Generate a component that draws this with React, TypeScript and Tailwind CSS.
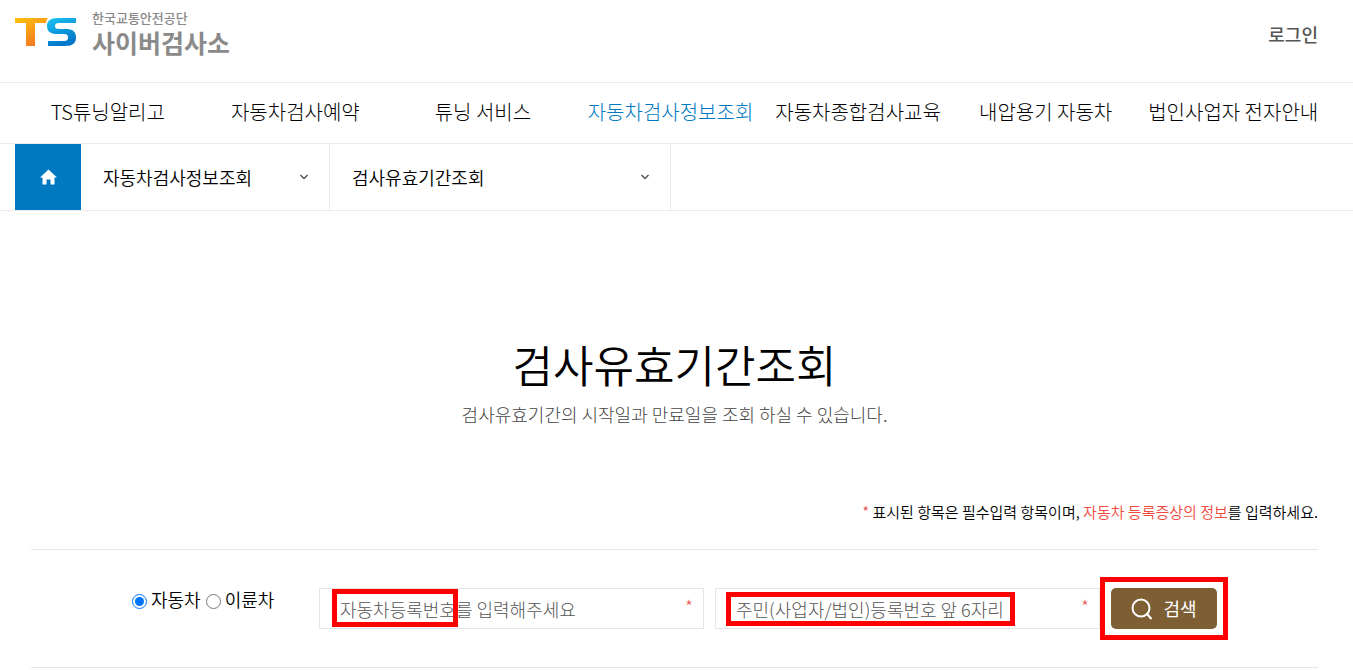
import React, { useState } from "react";

const menu = [
  { title: "TS튜닝알리고" },
  { title: "자동차검사예약" },
  { title: "튜닝 서비스" },
  { title: "자동차검사정보조회", active: true },
  { title: "자동차종합검사교육" },
  { title: "내압용기 자동차" },
  { title: "법인사업자 전자안내" },
];

function Logo() {
  return (
    <a href="#" className="flex gap-4">
      <svg className="mt-2 h-7 w-[61px]" viewBox="0 0 61 28" aria-label="TS">
        <defs>
          <linearGradient id="logoT" x1="0" y1="0" x2="0.5" y2="1">
            <stop offset="0" stopColor="#ffc20e" />
            <stop offset="1" stopColor="#f47b20" />
          </linearGradient>
          <linearGradient id="logoS" x1="0" y1="0" x2="0.4" y2="1">
            <stop offset="0" stopColor="#1cc4f4" />
            <stop offset="1" stopColor="#0077c8" />
          </linearGradient>
        </defs>
        <path d="M0 0H33Q31 2 31 5H20V28H11V5H0Z" fill="url(#logoT)" />
        <path
          d="M61 0H43C35 0 32 3 32 8C32 14 36 16 42 16H49C52 16 53 17 53 19.500C53 22 52 23 49 23H33V28H50C58 28 61 25 61 19.500C61 13 57 11 51 11H44C41 11 40 10 40 8C40 6 41 5 44 5H61Z"
          fill="url(#logoS)"
        />
      </svg>
      <span className="flex flex-col text-[#8a8a8a]">
        <span className="text-[13px] leading-4 font-medium">한국교통안전공단</span>
        <span className="text-[25px] leading-8 font-bold">사이버검사소</span>
      </span>
    </a>
  );
}

function Crumb({ title, width }: { title: string; width: string }) {
  return (
    <button
      type="button"
      className={`flex items-center justify-between border-r border-[#ebebeb] pr-5 pl-[22px] text-[18px] leading-6 ${width}`}
    >
      {title}
      <svg className="h-2 w-2.5" viewBox="0 0 10 8" fill="none" stroke="#555" strokeWidth="1.5">
        <path d="M1.500 2L5 5.500L8.500 2" />
      </svg>
    </button>
  );
}

type FieldProps = {
  label: string;
  placeholder: string;
  mark: string;
};

function Field({ label, placeholder, mark }: FieldProps) {
  return (
    <div className="relative flex-1">
      <input
        type="text"
        aria-label={label}
        placeholder={placeholder}
        className="h-[41px] w-full border border-[#e5e5e5] px-5 text-[18px] font-light placeholder:text-[#555]"
      />
      <span className="absolute top-1 right-[11px] text-[18px] leading-7 font-light text-[#e8504a]">*</span>
      <span className={`pointer-events-none absolute border-[5px] border-[#ff0000] ${mark}`} />
    </div>
  );
}

export default function App() {
  const [kind, setKind] = useState("car");

  return (
    <div className="bg-white font-['Noto_Sans_CJK_KR','Noto_Sans',sans-serif] font-[350] text-black">
      {/* header */}
      <header className="flex h-[83px] items-start justify-between border-b border-[#ebebeb] pt-2.5 pr-[35px] pl-[15px]">
        <Logo />
        <a href="#" className="mt-3 text-[18px] leading-6 font-medium text-[#555]">
          로그인
        </a>
      </header>

      {/* main menu */}
      <nav className="border-b border-[#ebebeb] pr-[26px] pl-[14px]">
        <ul className="grid h-[60px] grid-cols-7 items-center pb-0.5">
          {menu.map((m) => (
            <li key={m.title} className="text-center text-[20px] leading-7 font-light whitespace-nowrap">
              <a href="#" className={m.active ? "text-[#0079c2]" : "text-black"}>
                {m.title}
              </a>
            </li>
          ))}
        </ul>
      </nav>

      {/* breadcrumb */}
      <div className="flex h-[67px] border-b border-[#ebebeb] pl-[15px]">
        <a
          href="#"
          aria-label="홈"
          className="flex w-[66px] items-center justify-center bg-[#0079c2]"
        >
          <svg className="h-4 w-[17px]" viewBox="0 0 17 16" fill="#fff">
            <path d="M8.500 0.500L17 8.500H14.500V15.500H10.500V10.500H6.500V15.500H2.500V8.500H0Z" />
          </svg>
        </a>
        <Crumb title="자동차검사정보조회" width="w-[249px]" />
        <Crumb title="검사유효기간조회" width="w-[341px]" />
      </div>

      <main className="pr-[35px] pl-[31px]">
        <div className="pt-[121px] text-center">
          <h1 className="text-[44px] leading-[64px]">검사유효기간조회</h1>
          <p className="mt-1.5 text-[18px] leading-6 font-light text-[#444]">
            검사유효기간의 시작일과 만료일을 조회 하실 수 있습니다.
          </p>
        </div>

        <p className="mt-[74px] text-right text-[15px] leading-6">
          <span className="text-[#e8504a]">*</span> 표시된 항목은 필수입력 항목이며,{" "}
          <span className="text-[#f04a3e]">자동차 등록증상의 정보</span>를 입력하세요.
        </p>

        <form
          className="mt-[25px] flex h-[119px] items-center gap-[11px] border-y border-[#e5e5e5] px-[101px]"
          onSubmit={(e) => e.preventDefault()}
        >
          <div className="flex w-[176px] gap-[5px] pb-5 text-[18px] leading-6">
            <label className="flex items-center gap-1">
              <input
                type="radio"
                name="kind"
                className="mt-1.5 h-[15px] w-[15px]"
                checked={kind === "car"}
                onChange={() => setKind("car")}
              />
              자동차
            </label>
            <label className="flex items-center gap-1">
              <input
                type="radio"
                name="kind"
                className="mt-1.5 h-[15px] w-[15px]"
                checked={kind === "bike"}
                onChange={() => setKind("bike")}
              />
              이륜차
            </label>
          </div>
          <Field
            label="자동차등록번호"
            placeholder="자동차등록번호를 입력해주세요"
            mark="top-px left-[13px] h-[38px] w-[126px]"
          />
          <Field
            label="주민(사업자/법인)등록번호"
            placeholder="주민(사업자/법인)등록번호 앞 6자리"
            mark="top-1 left-[11px] h-[34px] w-[289px]"
          />
          <div className="relative">
            <button
              type="submit"
              className="flex h-[41px] w-[106px] items-center justify-center gap-2.5 rounded-[5px] bg-[#7e5f33] text-[18px] font-normal text-white"
            >
              <svg className="h-[22px] w-[22px]" viewBox="0 0 22 22" fill="none" stroke="#fff" strokeWidth="2">
                <circle cx="10" cy="10" r="8.500" />
                <path d="M15.500 15.500L20.500 21" />
              </svg>
              검색
            </button>
            <span className="pointer-events-none absolute -inset-[11px] border-[5px] border-[#ff0000]" />
          </div>
        </form>
      </main>
    </div>
  );
}
